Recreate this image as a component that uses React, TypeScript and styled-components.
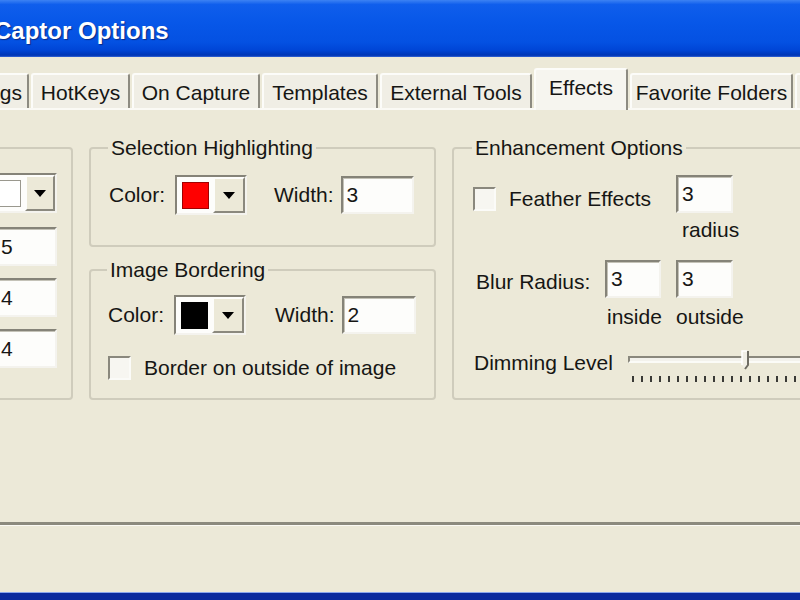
import * as React from 'react';
import styled, { createGlobalStyle } from 'styled-components';

const GlobalStyle = createGlobalStyle`
  html, body {
    margin: 0;
    padding: 0;
    background: #ece9d8;
  }
  body {
    font-family: "Liberation Sans", Arial, sans-serif;
    font-size: 21px;
    color: #161614;
  }
`;

const Window = styled.div`
  width: 800px;
  height: 600px;
  overflow: hidden;
  display: flex;
  flex-direction: column;
  background: #ece9d8;
`;

const TitleBar = styled.div`
  flex: none;
  height: 57px;
  box-sizing: border-box;
  padding-top: 5px;
  display: flex;
  align-items: center;
  background: linear-gradient(
    180deg,
    #3c82f3 0%,
    #0f5eec 8%,
    #0757e8 40%,
    #0451e2 74%,
    #0045d6 88%,
    #0035b4 97%,
    #3667d8 100%
  );
`;

const TitleText = styled.span`
  margin-left: -6px;
  font-weight: bold;
  font-size: 24px;
  color: #ffffff;
  text-shadow: 1px 1px 1px #0a2a86;
  white-space: nowrap;
`;

const TabStrip = styled.div`
  flex: none;
  height: 51px;
  display: flex;
  align-items: flex-end;
  gap: 2px;
  margin-left: -61px;
  position: relative;
  z-index: 1;
`;

const Tab = styled.div<{ $w: number; $active?: boolean }>`
  flex: none;
  box-sizing: border-box;
  width: ${p => p.$w}px;
  height: ${p => (p.$active ? 42 : 35)}px;
  margin-bottom: ${p => (p.$active ? -2 : 0)}px;
  padding: ${p => (p.$active ? '0 0 4px' : '3px 0 0')};
  display: flex;
  align-items: center;
  justify-content: center;
  background: ${p => (p.$active ? '#f6f5ef' : '#f0eee5')};
  border: 2px solid #fcfcf9;
  border-bottom: none;
  border-right-color: #8d8b81;
  border-radius: 3px 3px 0 0;
  white-space: nowrap;
`;

const Panel = styled.div`
  flex: 1;
  border-top: 2px solid #fbfaf5;
  border-bottom: 3px solid #8c8a7e;
  box-shadow: 0 1px 0 #fbfaf4;
  padding-top: 26px;
`;

const Columns = styled.div`
  display: flex;
  align-items: stretch;
  gap: 16px;
`;

const Group = styled.fieldset<{ $w: number }>`
  flex: none;
  box-sizing: border-box;
  width: ${p => p.$w}px;
  min-width: 0;
  margin: 0;
  padding: 15px 18px 0;
  border: 2px solid #cfccbc;
  border-radius: 4px;
`;

const Legend = styled.legend`
  margin-left: -1px;
  padding: 0 3px;
  line-height: 24px;
`;

const SideGroup = styled(Group)`
  margin-left: -77px;
  margin-top: 11px;
  padding: 24px 14px 0 0;
  display: flex;
  flex-direction: column;
  align-items: flex-end;
  gap: 12px;
`;

const Stack = styled.div`
  flex: none;
  width: 347px;
  display: flex;
  flex-direction: column;
  gap: 11px;
`;

const HighlightGroup = styled(Group)`
  padding-bottom: 30px;
`;

const BorderGroup = styled(Group)`
  flex: 1;
  padding: 13px 17px 18px;
`;

const EnhanceGroup = styled(Group)`
  padding: 15px 0 0 19px;
`;

const FieldRow = styled.div`
  display: flex;
  align-items: center;
  height: 40px;
`;

const Label = styled.span<{ $ml?: number; $mr?: number }>`
  margin-left: ${p => p.$ml ?? 0}px;
  margin-right: ${p => p.$mr ?? 0}px;
  line-height: 24px;
  white-space: nowrap;
`;

const TextBox = styled.input<{ $w: number; $h?: number }>`
  box-sizing: border-box;
  width: ${p => p.$w}px;
  height: ${p => p.$h ?? 38}px;
  margin: 0;
  padding: 0 0 0 4px;
  font: inherit;
  color: #161614;
  background: #fdfdfb;
  border: 2px solid;
  border-color: #858378 #f4f3ee #f4f3ee #858378;
  box-shadow: inset 1px 1px 0 #c4c2b7;
  outline: none;
`;

const PickerFrame = styled.div<{ $mb?: number }>`
  flex: none;
  display: flex;
  height: 40px;
  box-sizing: border-box;
  margin-bottom: ${p => p.$mb ?? 0}px;
  border: 2px solid;
  border-color: #858378 #f4f3ee #f4f3ee #858378;
  background: #fdfdfb;
`;

const SwatchCell = styled.div<{ $w: number }>`
  width: ${p => p.$w}px;
  display: flex;
  align-items: center;
  justify-content: center;
`;

const Swatch = styled.div<{ $color: string; $w: number; $edge: string }>`
  box-sizing: border-box;
  width: ${p => p.$w}px;
  height: 27px;
  background: ${p => p.$color};
  border: 1px solid ${p => p.$edge};
`;

const DropButton = styled.div<{ $w: number }>`
  box-sizing: border-box;
  width: ${p => p.$w}px;
  display: flex;
  align-items: center;
  justify-content: center;
  background: #ece9d8;
  border: 2px solid;
  border-color: #fdfdfb #8b897e #8b897e #fdfdfb;
  &::after {
    content: '';
    border-left: 6px solid transparent;
    border-right: 6px solid transparent;
    border-top: 7px solid #000;
  }
`;

const CheckRow = styled.label<{ $mt?: number }>`
  display: flex;
  align-items: center;
  gap: 13px;
  height: 24px;
  margin-top: ${p => p.$mt ?? 0}px;
`;

const CheckBox = styled.input.attrs({ type: 'checkbox' })`
  appearance: none;
  flex: none;
  box-sizing: border-box;
  width: 23px;
  height: 24px;
  margin: 0;
  background: #f7f6f1;
  border: 2px solid;
  border-color: #8a887d #fbfbf8 #fbfbf8 #8a887d;
`;

const EnhanceGrid = styled.div`
  display: grid;
  grid-template-columns: 132px 71px 57px 1fr;
  grid-template-rows: 38px 29px 56px 31px auto;
`;

const Caption = styled.span<{ $col: number; $row: number; $pl?: number }>`
  grid-column: ${p => p.$col};
  grid-row: ${p => p.$row};
  align-self: end;
  padding-left: ${p => p.$pl ?? 0}px;
  line-height: 24px;
  white-space: nowrap;
`;

const Cell = styled.div<{ $col: string; $row: number; $align?: string; $mb?: number; $mt?: number }>`
  grid-column: ${p => p.$col};
  grid-row: ${p => p.$row};
  align-self: ${p => p.$align ?? 'start'};
  margin-bottom: ${p => p.$mb ?? 0}px;
  margin-top: ${p => p.$mt ?? 0}px;
  display: flex;
  align-items: flex-start;
`;

const Slider = styled.div`
  position: relative;
  flex: 1;
  margin-left: 15px;
  padding-top: 5px;
`;

const Track = styled.div`
  height: 3px;
  border-top: 2px solid #8a887d;
  border-left: 2px solid #8a887d;
  border-bottom: 2px solid #fbfbf7;
  background: #f3f2ec;
`;

const Ticks = styled.div`
  height: 6px;
  margin: 13px 0 0 4px;
  background: repeating-linear-gradient(90deg, #3a3a36 0 2px, transparent 2px 9px);
`;

const Thumb = styled.svg`
  position: absolute;
  left: 112px;
  top: -1px;
`;

const Footer = styled.div`
  flex: none;
  height: 67px;
`;

const BottomFrame = styled.div`
  flex: none;
  height: 7px;
  border-top: 1px solid #8aa6ee;
  background: #0b2a9e;
`;

const ColorPicker: React.FC<{ color: string; edge: string; cell: number; swatch: number; button: number; mb?: number }> = ({ color, edge, cell, swatch, button, mb }) => (
  <PickerFrame $mb={mb}>
    <SwatchCell $w={cell}>
      <Swatch $color={color} $w={swatch} $edge={edge} />
    </SwatchCell>
    <DropButton $w={button} />
  </PickerFrame>
);

const tabs = [
  { name: 'Settings', w: 90 },
  { name: 'HotKeys', w: 99 },
  { name: 'On Capture', w: 128 },
  { name: 'Templates', w: 116 },
  { name: 'External Tools', w: 152 },
  { name: 'Effects', w: 94, active: true },
  { name: 'Favorite Folders', w: 163 },
  { name: 'Misc', w: 80 },
];

const App: React.FC = () => {
  return (
    <Window>
      <GlobalStyle />
      <TitleBar>
        <TitleText>Captor Options</TitleText>
      </TitleBar>
      <TabStrip>
        {tabs.map(t => (
          <Tab key={t.name} $w={t.w} $active={t.active}>
            {t.name}
          </Tab>
        ))}
      </TabStrip>
      <Panel>
        <Columns>
          <SideGroup $w={150}>
            <ColorPicker color="#ffffff" edge="#9a988e" cell={60} swatch={52} button={30} mb={2} />
            <TextBox $w={62} $h={39} defaultValue="5" />
            <TextBox $w={62} $h={39} defaultValue="4" />
            <TextBox $w={62} $h={39} defaultValue="4" />
          </SideGroup>
          <Stack>
            <HighlightGroup $w={347}>
              <Legend>Selection Highlighting</Legend>
              <FieldRow>
                <Label $mr={10}>Color:</Label>
                <ColorPicker color="#ff0000" edge="#a00000" cell={36} swatch={27} button={32} />
                <Label $ml={27} $mr={7}>Width:</Label>
                <TextBox $w={73} defaultValue="3" />
              </FieldRow>
            </HighlightGroup>
            <BorderGroup $w={347}>
              <Legend>Image Bordering</Legend>
              <FieldRow>
                <Label $mr={10}>Color:</Label>
                <ColorPicker color="#000000" edge="#000000" cell={36} swatch={27} button={32} />
                <Label $ml={29} $mr={7}>Width:</Label>
                <TextBox $w={74} defaultValue="2" />
              </FieldRow>
              <CheckRow $mt={21}>
                <CheckBox />
                Border on outside of image
              </CheckRow>
            </BorderGroup>
          </Stack>
          <EnhanceGroup $w={380}>
            <Legend>Enhancement Options</Legend>
            <EnhanceGrid>
              <Cell $col="1 / 3" $row={1} $mt={12}>
                <CheckRow>
                  <CheckBox />
                  Feather Effects
                </CheckRow>
              </Cell>
              <Cell $col="3" $row={1}>
                <TextBox $w={57} defaultValue="3" />
              </Cell>
              <Caption $col={3} $row={2} $pl={6}>radius</Caption>
              <Cell $col="1" $row={3} $align="end" $mb={4}>
                <Label $ml={3}>Blur Radius:</Label>
              </Cell>
              <Cell $col="2" $row={3} $align="end">
                <TextBox $w={56} defaultValue="3" />
              </Cell>
              <Cell $col="3" $row={3} $align="end">
                <TextBox $w={57} defaultValue="3" />
              </Cell>
              <Caption $col={2} $row={4} $pl={2}>inside</Caption>
              <Caption $col={3} $row={4}>outside</Caption>
              <Cell $col="1 / -1" $row={5} $mt={22}>
                <Label $ml={1}>Dimming Level</Label>
                <Slider>
                  <Track />
                  <Ticks />
                  <Thumb width="10" height="22" viewBox="0 0 10 22">
                    <path d="M2 1 H8 V15 L5 19 L2 15 Z" fill="#f1efe6" />
                    <path d="M2 15 V1 H7" stroke="#ffffff" strokeWidth="1.5" fill="none" />
                    <path d="M8 1 V15 L5 19" stroke="#6f6d64" strokeWidth="2" fill="none" />
                  </Thumb>
                </Slider>
              </Cell>
            </EnhanceGrid>
          </EnhanceGroup>
        </Columns>
      </Panel>
      <Footer />
      <BottomFrame />
    </Window>
  );
};

export default App;
